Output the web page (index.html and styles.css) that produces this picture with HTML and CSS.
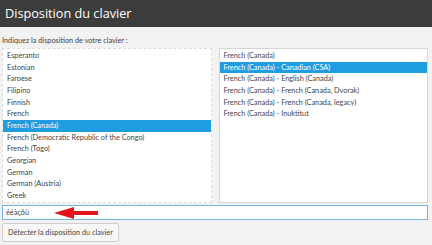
FILE: index.html
```html
<!DOCTYPE html>
<html lang="fr">
<head>
  <meta charset="UTF-8" />
  <title>Disposition du clavier</title>
  <link rel="stylesheet" href="styles.css">
</head>
<body>

  <div class="header">Disposition du clavier</div>

  <div class="content">
    <label class="prompt" for="layout">Indiquez la disposition de votre clavier :</label>

    <div class="lists">
      <ul class="list list-focus" id="layout">
        <li>Esperanto</li>
        <li>Estonian</li>
        <li>Faroese</li>
        <li>Filipino</li>
        <li>Finnish</li>
        <li>French</li>
        <li class="selected">French (Canada)</li>
        <li>French (Democratic Republic of the Congo)</li>
        <li>French (Togo)</li>
        <li>Georgian</li>
        <li>German</li>
        <li>German (Austria)</li>
        <li>Greek</li>
      </ul>
      <ul class="list" id="variant">
        <li>French (Canada)</li>
        <li class="selected">French (Canada) - Canadian (CSA)</li>
        <li>French (Canada) - English (Canada)</li>
        <li>French (Canada) - French (Canada, Dvorak)</li>
        <li>French (Canada) - French (Canada, legacy)</li>
        <li>French (Canada) - Inuktitut</li>
      </ul>
    </div>

    <div class="test-field">
      <input type="text" class="test-input" value="ééàçõù">
      <svg class="arrow" width="46" height="12" viewBox="0 0 46 12">
        <polygon points="0,6 20,0 20,4 44,4 44,8 20,8 20,12" fill="#e3141c" />
      </svg>
    </div>

    <button class="detect">Détecter la disposition du clavier</button>
  </div>

</body>
</html>
```

FILE: styles.css
```css
body {
  margin: 0;
  background-color: #f2f2f2;
  color: #444444;
  font-family: Lato, sans-serif;
  font-size: 7.3px;
}

.header {
  height: 27px;
  line-height: 27px;
  padding-left: 5px;
  background-color: #3c3c3c;
  color: #ffffff;
  font-family: "Open Sans", sans-serif;
  font-size: 12.7px;
}

.content {
  padding: 9px 4px 0 2px;
}

.prompt {
  display: block;
  height: 11px;
  line-height: 10px;
}

.lists {
  display: flex;
  gap: 7px;
  margin-top: 1px;
}

.list {
  flex: 1;
  height: 152px;
  margin: 0;
  padding: 1px 0 0 0;
  list-style: none;
  background-color: #ffffff;
  border: 1px solid #d6d6d6;
  overflow: hidden;
}

.list-focus {
  border-style: dashed;
  border-color: #dcdcdc;
}

.list li {
  height: 11.67px;
  line-height: 11.67px;
  padding-left: 4px;
  white-space: nowrap;
}

.list li.selected {
  background-color: #1f9de0;
  color: #ffffff;
}

.test-field {
  position: relative;
  margin-top: 2px;
}

.test-input {
  box-sizing: border-box;
  display: block;
  width: 100%;
  height: 15px;
  margin: 0;
  padding: 0 3px;
  border: 1px solid #74b8e2;
  background-color: #ffffff;
  color: #444444;
  font-family: inherit;
  font-size: 7.3px;
  outline: none;
}

.arrow {
  position: absolute;
  left: 52px;
  top: 2px;
}

.detect {
  display: block;
  height: 19px;
  margin-top: 3px;
  padding: 0 5px;
  border: 1px solid #cfcfcf;
  border-radius: 2px;
  background-color: #f7f7f7;
  color: #444444;
  font-family: inherit;
  font-size: 7.3px;
}
```
